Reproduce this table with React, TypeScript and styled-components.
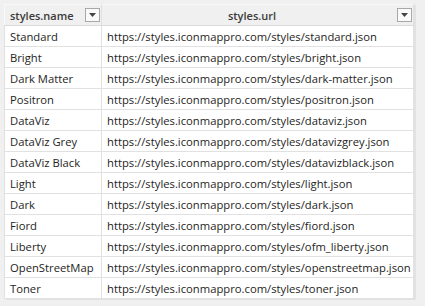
import React from 'react';
import styled, {createGlobalStyle} from "styled-components";


const styleList = [
    {name: "Standard", file: "standard"},
    {name: "Bright", file: "bright"},
    {name: "Dark Matter", file: "dark-matter"},
    {name: "Positron", file: "positron"},
    {name: "DataViz", file: "dataviz"},
    {name: "DataViz Grey", file: "datavizgrey"},
    {name: "DataViz Black", file: "datavizblack"},
    {name: "Light", file: "light"},
    {name: "Dark", file: "dark"},
    {name: "Fiord", file: "fiord"},
    {name: "Liberty", file: "ofm_liberty"},
    {name: "OpenStreetMap", file: "openstreetmap"},
    {name: "Toner", file: "toner"}
]


const FilterButton = () => {
    return (
        <StyleFilter>
            <svg width="7" height="4" viewBox="0 0 7 4">
                <path d="M0 0 H7 L3.5 4 Z" fill="#444"/>
            </svg>
        </StyleFilter>
    )
}


export default function App() {
    return (
        <>
            <GlobalStyle/>
            <StylePage>
                <StyleTable>
                    <colgroup>
                        <col style={{width: 97}}/>
                        <col style={{width: 312}}/>
                    </colgroup>
                    <thead>
                    <tr>
                        <HeadCell>
                            <HeadInner>
                                <HeadText>styles.name</HeadText>
                                <FilterButton/>
                            </HeadInner>
                        </HeadCell>
                        <HeadCell>
                            <HeadInner>
                                <HeadText $center>styles.url</HeadText>
                                <FilterButton/>
                            </HeadInner>
                        </HeadCell>
                    </tr>
                    </thead>
                    <tbody>
                    {styleList.map((s, index) => {
                        return (
                            <tr key={index}>
                                <Cell>{s.name}</Cell>
                                <Cell>https://styles.iconmappro.com/styles/{s.file}.json</Cell>
                            </tr>
                        )
                    })}
                    </tbody>
                </StyleTable>
            </StylePage>
        </>
    );
};

const GlobalStyle = createGlobalStyle`
  body {
    margin: 0;
    background: #f0f0f0;
  }
`

const StylePage = styled.div`
  width: 425px;
  height: 306px;
  padding: 4px 0 0 4px;
  box-sizing: border-box;
  font-family: "Open Sans", "Noto Sans", sans-serif;
  font-size: 11.25px;
  color: #252423;
`

const StyleTable = styled.table`
  border-collapse: collapse;
  table-layout: fixed;
  width: 410px;
  box-shadow: 2px 1px 0 #e2e2e2;
`

const HeadCell = styled.th`
  height: 21px;
  padding: 0 1px 0 5px;
  box-sizing: border-box;
  border-top: 1px solid #f8f8f8;
  border-bottom: 1px solid #dadada;
  border-left: 1px solid #f8f8f8;
  border-right: 1px solid #e0e0e0;
  background: #f0f0f0;
  text-align: left;
`

const HeadInner = styled.div`
  display: flex;
  align-items: center;
`

const HeadText = styled.span<{ $center?: boolean }>`
  flex: 1;
  font-weight: 600;
  font-size: 11px;
  color: #3b3a39;
  text-align: ${p => p.$center ? "center" : "left"};
  white-space: nowrap;
`

const StyleFilter = styled.span`
  width: 15px;
  height: 14px;
  box-sizing: border-box;
  border: 1px solid #a8a8a8;
  background: #fafafa;
  display: flex;
  justify-content: center;
  align-items: center;
`

const Cell = styled.td`
  height: 21px;
  padding: 0 0 0 5px;
  box-sizing: border-box;
  background: #ffffff;
  border: 1px solid #e1e1e1;
  white-space: nowrap;
  overflow: hidden;
`
